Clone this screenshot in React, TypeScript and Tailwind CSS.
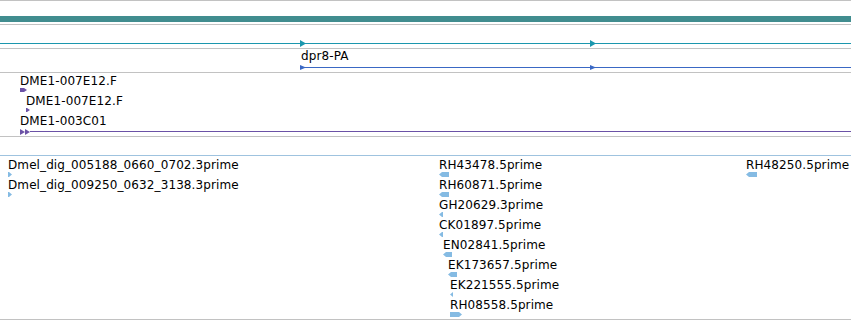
import React from "react";

// Track colours
const GRAY_LINE = "border-[#c2c2c2]";

type Dir = "left" | "right";

interface FeatureProps {
  label: string;
  offset: number; // label inset, px
  arrowOffset?: number;
  arrowWidth: number;
  dir: Dir;
}

const Arrow: React.FC<{ w: number; h: number; dir: Dir; color: string }> = ({
  w,
  h,
  dir,
  color,
}) => {
  const tip = Math.min(3, w);
  const pts =
    dir === "left"
      ? `0,${h / 2} ${tip},0 ${w},0 ${w},${h} ${tip},${h}`
      : `0,0 ${w - tip},0 ${w},${h / 2} ${w - tip},${h} 0,${h}`;
  return (
    <svg width={w} height={h} viewBox={`0 0 ${w} ${h}`} className="block shrink-0">
      <polygon points={pts} fill={color} />
    </svg>
  );
};

const EstRow: React.FC<FeatureProps> = ({ label, offset, arrowOffset, arrowWidth, dir }) => (
  <div className="h-[20px] flex flex-col" style={{ paddingLeft: offset }}>
    <div className="h-[14px] leading-[14px] whitespace-nowrap">{label}</div>
    <div className="h-[6px]" style={{ paddingLeft: (arrowOffset ?? offset) - offset }}>
      <Arrow w={arrowWidth} h={5} dir={dir} color="#85bbe3" />
    </div>
  </div>
);

const TrackArrow: React.FC<{ x: number; color: string; h: number }> = ({ x, color, h }) => (
  <div className="absolute top-0" style={{ left: x }}>
    <svg width="6" height={h} viewBox={`0 0 6 ${h}`} className="block">
      <polygon points={`0,0 6,${h / 2} 0,${h}`} fill={color} />
    </svg>
  </div>
);

const leftEsts: FeatureProps[] = [
  { label: "Dmel_dig_005188_0660_0702.3prime", offset: 0, arrowWidth: 4, dir: "right" },
  { label: "Dmel_dig_009250_0632_3138.3prime", offset: 0, arrowWidth: 4, dir: "right" },
];

const midEsts: FeatureProps[] = [
  { label: "RH43478.5prime", offset: 0, arrowWidth: 10, dir: "left" },
  { label: "RH60871.5prime", offset: 0, arrowWidth: 10, dir: "left" },
  { label: "GH20629.3prime", offset: 0, arrowWidth: 4, dir: "left" },
  { label: "CK01897.5prime", offset: 0, arrowWidth: 4, dir: "left" },
  { label: "EN02841.5prime", offset: 4, arrowWidth: 9, dir: "left" },
  { label: "EK173657.5prime", offset: 9, arrowWidth: 9, dir: "left" },
  { label: "EK221555.5prime", offset: 11, arrowWidth: 3, dir: "left" },
  { label: "RH08558.5prime", offset: 11, arrowWidth: 12, dir: "right" },
];

const rightEsts: FeatureProps[] = [
  { label: "RH48250.5prime", offset: 2, arrowOffset: 0, arrowWidth: 11, dir: "left" },
];

const App: React.FC = () => {
  return (
    <div className="w-[851px] h-[320px] bg-white text-black text-[12px] tracking-[0.1px] font-['DejaVu_Sans',sans-serif] overflow-hidden">
      {/* overview bar */}
      <div className={`border-t border-b ${GRAY_LINE} pt-[15px] pb-[2px]`}>
        <div className="h-[6px] bg-[#418d8f]" />
      </div>

      {/* gene span */}
      <div className={`border-b ${GRAY_LINE} pt-[15px] pb-px`}>
        <div className="relative h-[7px] flex items-center">
          <div className="h-px w-full bg-[#1b97ae]" />
          <TrackArrow x={300} h={7} color="#1b97ae" />
          <TrackArrow x={590} h={7} color="#1b97ae" />
        </div>
      </div>

      {/* transcript */}
      <div className={`border-b ${GRAY_LINE} pb-[2px]`}>
        <div className="h-[14px] leading-[14px] pl-[301px]">dpr8-PA</div>
        <div className="relative h-[5px] mt-[2px] pl-[300px] flex items-center">
          <div className="h-px flex-1 bg-[#3a68c4]" />
          <TrackArrow x={300} h={5} color="#3a68c4" />
          <TrackArrow x={590} h={5} color="#3a68c4" />
        </div>
      </div>

      {/* cDNA clones */}
      <div className={`border-b ${GRAY_LINE} pt-px pb-px`}>
        <div className="h-[20px] pl-[20px] flex flex-col">
          <div className="h-[14px] leading-[14px]">DME1-007E12.F</div>
          <div className="h-[6px]">
            <Arrow w={7} h={4} dir="right" color="#6b52a6" />
          </div>
        </div>
        <div className="h-[20px] pl-[26px] flex flex-col">
          <div className="h-[14px] leading-[14px]">DME1-007E12.F</div>
          <div className="h-[6px]">
            <Arrow w={4} h={4} dir="right" color="#6b52a6" />
          </div>
        </div>
        <div className="h-[21px] pl-[20px] flex flex-col">
          <div className="h-[14px] leading-[14px]">DME1-003C01</div>
          <div className="h-[7px] flex items-center">
            <svg width="10" height="6" viewBox="0 0 10 6" className="block shrink-0">
              <polygon points="0,0 5,3 0,6" fill="#6b52a6" />
              <polygon points="5,0 10,3 5,6" fill="#6b52a6" />
            </svg>
            <div className="h-px flex-1 bg-[#6b52a6]" />
          </div>
        </div>
      </div>

      {/* empty track */}
      <div className="h-[19px] border-b border-[#9fc3df]" />

      {/* ESTs */}
      <div className={`border-b ${GRAY_LINE} pt-[2px] pb-px flex`}>
        <div className="w-[439px] pl-[8px] flex flex-col">
          {leftEsts.map((e, i) => (
            <EstRow key={i} {...e} />
          ))}
        </div>
        <div className="w-[305px] flex flex-col">
          {midEsts.map((e, i) => (
            <EstRow key={i} {...e} />
          ))}
        </div>
        <div className="flex-1 flex flex-col">
          {rightEsts.map((e, i) => (
            <EstRow key={i} {...e} />
          ))}
        </div>
      </div>
    </div>
  );
};

export default App;
